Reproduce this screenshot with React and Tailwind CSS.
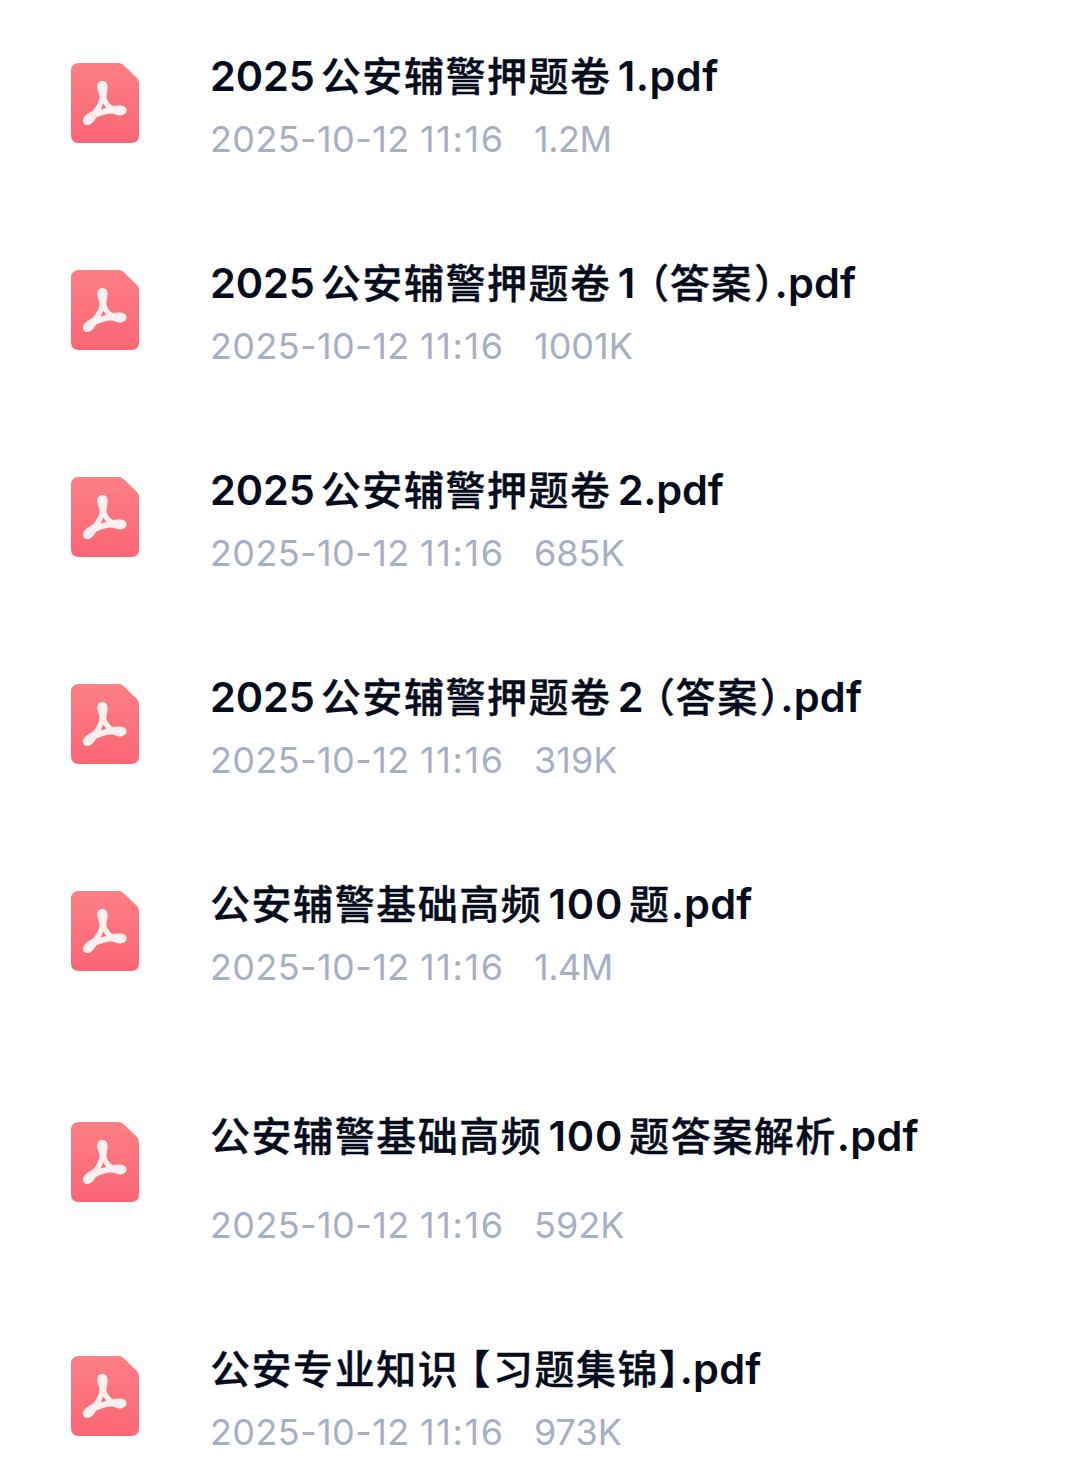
const files = [
  {
    name: ["2025", "公安辅警押题卷", "1.pdf"],
    size: "1.2M",
    row: "h-[207px]",
  },
  {
    name: ["2025", "公安辅警押题卷", "1", "（", "答案", "）", ".pdf"],
    size: "1001K",
    row: "h-[207px]",
  },
  {
    name: ["2025", "公安辅警押题卷", "2.pdf"],
    size: "685K",
    row: "h-[207px]",
  },
  {
    name: ["2025", "公安辅警押题卷", "2", "（", "答案", "）", ".pdf"],
    size: "319K",
    row: "h-[207px]",
  },
  {
    name: ["公安辅警基础高频", "100", "题", ".pdf"],
    size: "1.4M",
    row: "h-[231px]",
  },
  {
    name: ["公安辅警基础高频", "100", "题答案解析", ".pdf"],
    size: "592K",
    row: "h-[234px]",
    title: "pt-[45px]",
    gap: "mt-[37px]",
  },
  {
    name: ["公安专业知识", "【", "习题集锦", "】", ".pdf"],
    size: "973K",
    row: "h-[189px]",
  },
];

const LATIN = "font-['Inter',sans-serif] font-semibold text-[41.5px]";
const CJK =
  "font-['Noto_Sans_CJK_SC',sans-serif] font-medium text-[40px] tracking-[1.55px] [-webkit-text-stroke:0.4px_#060c1c]";
const BRACKET = `${CJK} [font-feature-settings:'halt']`;

const isLatin = (run) => /^[\x20-\x7e]+$/.test(run);

// a small gap goes between Chinese and digits, none before ".pdf"
function runClass(run, next) {
  if (run === "（") return `${BRACKET} ml-[12px] mr-[-1px]`;
  if (run === "【") return `${BRACKET} ml-[11px] mr-[1px]`;
  if (run === "）") return `${BRACKET} ml-[1px] mr-[-1px]`;
  if (run === "】") return `${BRACKET} mr-[-1px]`;
  if (run === ".pdf") return `${LATIN} tracking-[0.2px]`;
  if (run === "1.pdf") return `${LATIN} tracking-[0.5px]`;
  if (run === "2.pdf") return `${LATIN} tracking-[-0.2px]`;
  if (run === "100") return `${LATIN} tracking-[0.8px] mr-[6px]`;
  if (isLatin(run)) {
    if (next !== "（") return `${LATIN} tracking-[-0.1px] mr-[6px]`;
    return run === "1" ? `${LATIN} mr-[2px]` : `${LATIN} tracking-[-0.5px]`;
  }
  return next && isLatin(next) && next !== ".pdf" ? `${CJK} mr-[6px]` : CJK;
}

function PdfIcon() {
  return (
    <svg viewBox="0 0 69 81" className="w-[69px] h-[81px] shrink-0">
      <defs>
        <linearGradient id="page" x1="0" y1="0" x2="0" y2="1">
          <stop offset="0" stopColor="#fd7f84" />
          <stop offset="1" stopColor="#fb6575" />
        </linearGradient>
      </defs>
      <path
        d="M9 0H48.500Q51.500 0 53.500 2L67 15Q69 17 69 20V72Q69 80 61 80H9Q1 80 1 72V8Q1 0 9 0Z"
        fill="url(#page)"
      />
      <path
        fill="#fff0f0"
        fillRule="evenodd"
        d="M32.500 18C29 18 27 20.700 27.200 24.500C27.500 27.500 29.800 31.500 29.600 34.500C29.300 38 25.500 45.500 22.500 47.800C20 49.500 16.500 51 14.200 54C12.300 56.500 12.500 59.800 15 61.400C18 63 21.500 61 23.500 58.500C25 56.500 25.500 55 27.500 54C31 52.200 37 50.500 41 50.400C44.500 50.400 46.800 52.800 50.500 52.500C54.500 52.200 57 49.500 56.500 46.500C55.900 43 51.500 42 47.500 42.600C44.500 43 43 43.300 41.200 42C38.500 40 36.500 36.500 36.500 33.800C36.500 30.500 37.800 27 37.600 23.500C37.400 20.200 35.500 18 32.500 18ZM33 40.500L36.300 44.800L30.800 46.400Z"
      />
    </svg>
  );
}

function FileRow({ file }) {
  return (
    <li className={`flex items-start pl-[70px] ${file.row}`}>
      <div className="pt-[63px]">
        <PdfIcon />
      </div>
      <div className={`ml-[71px] ${file.title || "pt-[44px]"}`}>
        <h2 className="flex h-[60px] items-baseline whitespace-nowrap leading-[60px] text-[#060c1c]">
          {file.name.map((run, i) => (
            <span key={i} className={runClass(run, file.name[i + 1])}>
              {run}
            </span>
          ))}
        </h2>
        <p
          className={`flex h-[48px] whitespace-nowrap font-['Inter',sans-serif] text-[36px] leading-[48px] text-[#a8afc4] ${file.gap || "mt-[11px]"}`}
        >
          <span className="w-[210px] tracking-[0.4px]">2025-10-12</span>
          <span className="w-[114px] tracking-[1.6px]">11:16</span>
          <span className={file.size.endsWith("M") ? "tracking-[-0.5px]" : ""}>
            {file.size}
          </span>
        </p>
      </div>
    </li>
  );
}

export default function App() {
  return (
    <main className="h-[1482px] w-[1080px] overflow-hidden bg-white">
      <ul>
        {files.map((file, i) => (
          <FileRow key={i} file={file} />
        ))}
      </ul>
    </main>
  );
}
